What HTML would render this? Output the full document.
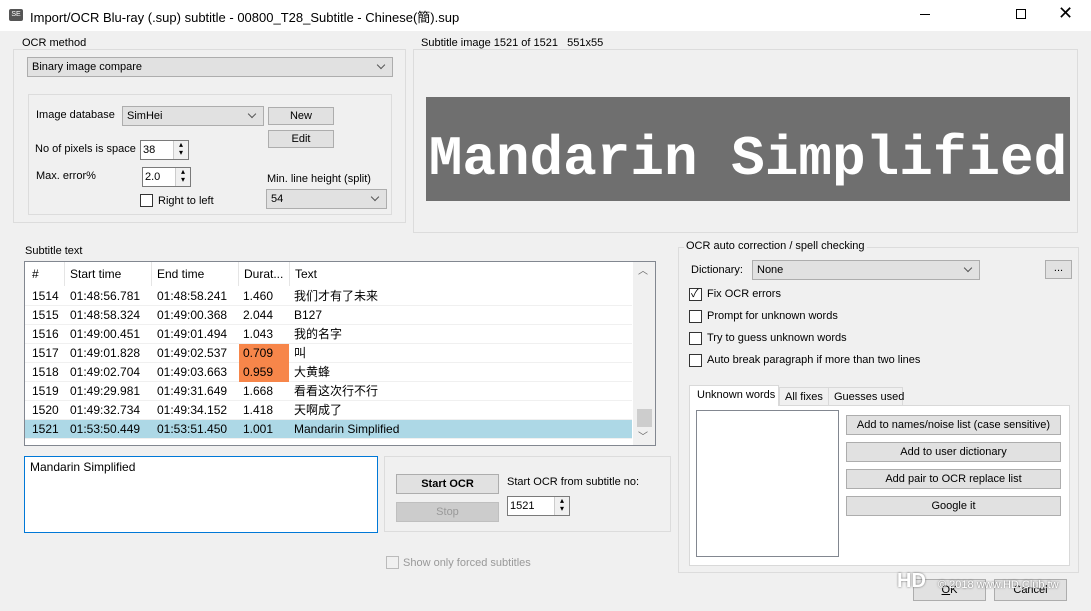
<!DOCTYPE html><html><head><meta charset="utf-8"><style>
*{box-sizing:border-box;margin:0;padding:0}
body{width:1091px;height:611px;background:#f0f0f0;font:12px "Liberation Sans","Noto Sans CJK SC",sans-serif;color:#000;position:relative;overflow:hidden}
.a{position:absolute;white-space:nowrap}
.grp{position:absolute;border:1px solid #dcdcdc}
.lbl{position:absolute;background:#f0f0f0;padding:0 2px;font-size:11px;white-space:nowrap}
.cb{position:absolute;background:#e1e1e1;border:1px solid #adadad;padding-left:4px;line-height:18px;font-size:11px}
.cb:after{content:"";position:absolute;right:8px;top:4px;width:5px;height:5px;border-right:1px solid #555;border-bottom:1px solid #555;transform:rotate(45deg)}
.btn{position:absolute;background:#e1e1e1;border:1px solid #adadad;text-align:center;font-size:11px}
.sp{position:absolute;background:#fff;border:1px solid #7a7a7a;padding-left:2px;font-size:11px}
.sp:after{content:"▴\A▾";white-space:pre;position:absolute;right:0;top:0;width:14px;height:100%;border-left:1px solid #ccc;font-size:8px;line-height:8px;text-align:center;background:#f0f0f0}
.chk{position:absolute;width:13px;height:13px;border:1px solid #333;background:#fff}
.row{position:absolute;left:25px;width:607px;height:19px;border-bottom:1px solid #f0f0f0;font-size:12px;line-height:19px}
.row span{position:absolute}
</style></head><body>
<div class="a" style="left:0;top:0;width:1091px;height:31px;background:#fff"></div>
<div class="a" style="left:9px;top:9px;width:14px;height:12px;background:#555;border-radius:2px;color:#fff;font-size:7px;text-align:center;line-height:12px">SE</div>
<div class="a" style="left:30px;top:7px;font-size:13px">Import/OCR Blu-ray (.sup) subtitle - 00800_T28_Subtitle - Chinese(簡).sup</div>
<div class="a" style="left:920px;top:14px;width:10px;height:1px;background:#000"></div>
<div class="a" style="left:1016px;top:9px;width:10px;height:10px;border:1px solid #000"></div>
<div class="a" style="left:1058px;top:3px;font-size:18px">✕</div>

<div class="grp" style="left:13px;top:49px;width:393px;height:174px"></div>
<div class="lbl" style="left:20px;top:37px">OCR method</div>
<div class="cb" style="left:27px;top:57px;width:366px;height:20px">Binary image compare</div>
<div class="grp" style="left:28px;top:94px;width:364px;height:121px"></div>
<div class="a" style="left:36px;top:109px;font-size:11px">Image database</div>
<div class="cb" style="left:122px;top:106px;width:142px;height:20px">SimHei</div>
<div class="btn" style="left:268px;top:107px;width:66px;height:18px;line-height:16px">New</div>
<div class="btn" style="left:268px;top:130px;width:66px;height:18px;line-height:16px">Edit</div>
<div class="a" style="left:35px;top:143px;font-size:11px">No of pixels is space</div>
<div class="sp" style="left:140px;top:140px;width:49px;height:20px;line-height:18px">38</div>
<div class="a" style="left:36px;top:170px;font-size:11px">Max. error%</div>
<div class="sp" style="left:142px;top:167px;width:49px;height:20px;line-height:18px">2.0</div>
<div class="chk" style="left:140px;top:194px"></div>
<div class="a" style="left:158px;top:195px;font-size:11px">Right to left</div>
<div class="a" style="left:267px;top:173px;font-size:11px">Min. line height (split)</div>
<div class="cb" style="left:266px;top:189px;width:121px;height:20px">54</div>

<div class="grp" style="left:413px;top:49px;width:665px;height:184px"></div>
<div class="lbl" style="left:419px;top:37px">Subtitle image 1521 of 1521&nbsp;&nbsp;&nbsp;551x55</div>
<div class="a" style="left:426px;top:97px;width:644px;height:104px;background:#6f6f6f;overflow:hidden"></div>
<div class="a" style="left:426px;top:97px;width:644px;height:104px;color:#fff;font:bold 56px 'Liberation Mono',monospace;line-height:124px;text-align:center;letter-spacing:0">Mandarin Simplified</div>

<div class="a" style="left:25px;top:245px;font-size:11px">Subtitle text</div>
<div class="a" style="left:24px;top:261px;width:632px;height:185px;background:#fff;border:1px solid #828790"></div>
<div class="a" style="left:25px;top:262px;width:607px;height:24px;font-size:12px;line-height:24px">
<span class="a" style="left:7px">#</span><span class="a" style="left:45px">Start time</span><span class="a" style="left:132px">End time</span><span class="a" style="left:219px">Durat...</span><span class="a" style="left:270px">Text</span>
<span class="a" style="left:39px;top:0;width:1px;height:24px;background:#e5e5e5"></span><span class="a" style="left:126px;top:0;width:1px;height:24px;background:#e5e5e5"></span><span class="a" style="left:213px;top:0;width:1px;height:24px;background:#e5e5e5"></span><span class="a" style="left:264px;top:0;width:1px;height:24px;background:#e5e5e5"></span></div>
<div class="row" style="top:287px"><span style="left:7px">1514</span><span style="left:45px">01:48:56.781</span><span style="left:132px">01:48:58.241</span><span style="left:218px">1.460</span><span style="left:269px">我们才有了未来</span></div>
<div class="row" style="top:306px"><span style="left:7px">1515</span><span style="left:45px">01:48:58.324</span><span style="left:132px">01:49:00.368</span><span style="left:218px">2.044</span><span style="left:269px">B127</span></div>
<div class="row" style="top:325px"><span style="left:7px">1516</span><span style="left:45px">01:49:00.451</span><span style="left:132px">01:49:01.494</span><span style="left:218px">1.043</span><span style="left:269px">我的名字</span></div>
<div class="row" style="top:344px"><span style="left:214px;width:50px;height:19px;background:#f7864a"></span><span style="left:7px">1517</span><span style="left:45px">01:49:01.828</span><span style="left:132px">01:49:02.537</span><span style="left:218px">0.709</span><span style="left:269px">叫</span></div>
<div class="row" style="top:363px"><span style="left:214px;width:50px;height:19px;background:#f7864a"></span><span style="left:7px">1518</span><span style="left:45px">01:49:02.704</span><span style="left:132px">01:49:03.663</span><span style="left:218px">0.959</span><span style="left:269px">大黄蜂</span></div>
<div class="row" style="top:382px"><span style="left:7px">1519</span><span style="left:45px">01:49:29.981</span><span style="left:132px">01:49:31.649</span><span style="left:218px">1.668</span><span style="left:269px">看看这次行不行</span></div>
<div class="row" style="top:401px"><span style="left:7px">1520</span><span style="left:45px">01:49:32.734</span><span style="left:132px">01:49:34.152</span><span style="left:218px">1.418</span><span style="left:269px">天啊成了</span></div>
<div class="row" style="top:420px;background:#add8e6"><span style="left:7px">1521</span><span style="left:45px">01:53:50.449</span><span style="left:132px">01:53:51.450</span><span style="left:218px">1.001</span><span style="left:269px">Mandarin Simplified</span></div>
<div class="a" style="left:633px;top:262px;width:22px;height:183px;background:#f0f0f0"></div>
<div class="a" style="left:638px;top:262px;font-size:10px;color:#666">︿</div>
<div class="a" style="left:638px;top:428px;font-size:10px;color:#666">﹀</div>
<div class="a" style="left:637px;top:409px;width:15px;height:18px;background:#cdcdcd"></div>

<div class="a" style="left:24px;top:456px;width:354px;height:77px;background:#fff;border:1px solid #0078d7;padding:3px 5px">Mandarin Simplified</div>
<div class="grp" style="left:384px;top:456px;width:287px;height:76px"></div>
<div class="btn" style="left:396px;top:474px;width:103px;height:20px;line-height:18px;font-weight:bold">Start OCR</div>
<div class="btn" style="left:396px;top:502px;width:103px;height:20px;line-height:18px;color:#999;background:#ccc;border-color:#bfbfbf">Stop</div>
<div class="a" style="left:507px;top:476px;font-size:11px">Start OCR from subtitle no:</div>
<div class="sp" style="left:507px;top:496px;width:63px;height:20px;line-height:18px">1521</div>
<div class="chk" style="left:386px;top:556px;border-color:#bbb;background:#f0f0f0"></div>
<div class="a" style="left:403px;top:557px;font-size:11px;color:#999">Show only forced subtitles</div>

<div class="grp" style="left:678px;top:247px;width:401px;height:326px"></div>
<div class="lbl" style="left:684px;top:240px">OCR auto correction / spell checking</div>
<div class="a" style="left:691px;top:264px;font-size:11px">Dictionary:</div>
<div class="cb" style="left:752px;top:260px;width:228px;height:20px">None</div>
<div class="btn" style="left:1045px;top:260px;width:27px;height:19px;line-height:14px">...</div>
<div class="chk" style="left:689px;top:288px"></div><div class="a" style="left:691px;top:285px;font-size:11px">✓</div>
<div class="a" style="left:707px;top:288px;font-size:11px">Fix OCR errors</div>
<div class="chk" style="left:689px;top:310px"></div><div class="a" style="left:707px;top:310px;font-size:11px">Prompt for unknown words</div>
<div class="chk" style="left:689px;top:332px"></div><div class="a" style="left:707px;top:332px;font-size:11px">Try to guess unknown words</div>
<div class="chk" style="left:689px;top:354px"></div><div class="a" style="left:707px;top:354px;font-size:11px">Auto break paragraph if more than two lines</div>

<div class="a" style="left:689px;top:405px;width:381px;height:161px;background:#fff;border:1px solid #d9d9d9"></div>
<div class="a" style="left:689px;top:385px;width:90px;height:21px;background:#fff;border:1px solid #d9d9d9;border-bottom:none;font-size:11px;padding:3px 0 0 7px">Unknown words</div>
<div class="a" style="left:779px;top:387px;width:50px;height:18px;border:1px solid #d9d9d9;border-bottom:none;font-size:11px;padding:3px 0 0 5px">All fixes</div>
<div class="a" style="left:828px;top:387px;width:75px;height:18px;border:1px solid #d9d9d9;border-bottom:none;font-size:11px;padding:3px 0 0 5px">Guesses used</div>
<div class="a" style="left:696px;top:410px;width:143px;height:147px;border:1px solid #828790;background:#fff"></div>
<div class="btn" style="left:846px;top:415px;width:215px;height:20px;line-height:18px">Add to names/noise list (case sensitive)</div>
<div class="btn" style="left:846px;top:442px;width:215px;height:20px;line-height:18px">Add to user dictionary</div>
<div class="btn" style="left:846px;top:469px;width:215px;height:20px;line-height:18px">Add pair to OCR replace list</div>
<div class="btn" style="left:846px;top:496px;width:215px;height:20px;line-height:18px">Google it</div>

<div class="btn" style="left:913px;top:579px;width:73px;height:22px;line-height:20px"><u>O</u>K</div>
<div class="btn" style="left:994px;top:579px;width:73px;height:22px;line-height:20px">Cancel</div>
<div class="a" style="left:897px;top:570px;font:bold 20px 'Liberation Sans',sans-serif;color:#fff;text-shadow:0 0 2px #666">HD</div>
<div class="a" style="left:938px;top:579px;font-size:11px;color:#fff;text-shadow:0 0 2px #555">© 2018 www.HD.Club.tw</div>
</body></html>
